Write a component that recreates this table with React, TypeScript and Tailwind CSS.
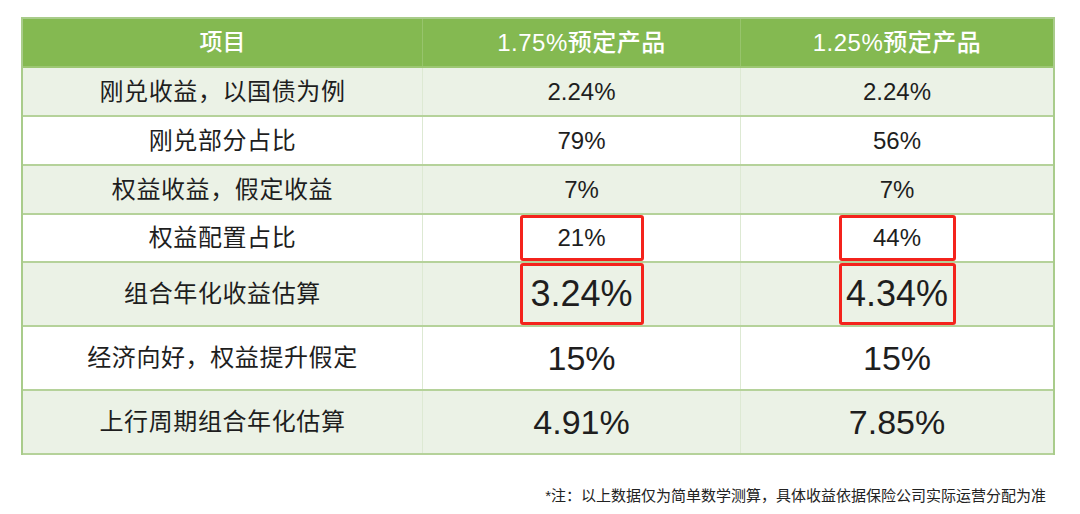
import React from "react";

const FONT = {
  fontFamily: '"Liberation Sans", "Noto Sans CJK SC", sans-serif',
};

type Row = {
  label: string;
  a: string;
  b: string;
  h: string;
  shade: boolean;
  big?: string;
  box?: boolean;
};

const rows: Row[] = [
  { label: "刚兑收益，以国债为例", a: "2.24%", b: "2.24%", h: "h-[49px]", shade: true },
  { label: "刚兑部分占比", a: "79%", b: "56%", h: "h-[49px]", shade: false },
  { label: "权益收益，假定收益", a: "7%", b: "7%", h: "h-[49px]", shade: true },
  { label: "权益配置占比", a: "21%", b: "44%", h: "h-[48px]", shade: false, box: true },
  { label: "组合年化收益估算", a: "3.24%", b: "4.34%", h: "h-[64px]", shade: true, big: "text-[36px]", box: true },
  { label: "经济向好，权益提升假定", a: "15%", b: "15%", h: "h-[64px]", shade: false, big: "text-[34px]" },
  { label: "上行周期组合年化估算", a: "4.91%", b: "7.85%", h: "h-[64px]", shade: true, big: "text-[34px]" },
];

function Value({ v, big, box, w }: { v: string; big?: string; box?: boolean; w: string }) {
  const size = big ?? "text-[24px]";
  if (box) {
    return (
      <div
        className={`${w} h-full border-[3px] border-[#f4231c] rounded-[3px] flex items-center justify-center ${size} text-[#1e1e1e] leading-none`}
      >
        {v}
      </div>
    );
  }
  return <div className={`${size} text-[#1e1e1e] leading-none`}>{v}</div>;
}

export default function App() {
  return (
    <div className="w-[1080px] h-[514px] bg-white relative" style={FONT}>
      <div className="pt-[17px] pl-[21px]">
        <div className="w-[1034px] border-x-2 border-t-2 border-[#a9cc8b]">
          {/* header */}
          <div className="grid grid-cols-[400px_318px_312px] h-[49px] bg-[#84b951] border-b-2 border-[#9cc772]">
            <div className="flex items-center justify-center text-white text-[23px] font-medium border-r border-[#97c46c]">
              项目
            </div>
            <div className="flex items-center justify-center text-white text-[24px] font-medium tracking-[0.5px] border-r border-[#97c46c]">
              1.75%预定产品
            </div>
            <div className="flex items-center justify-center text-white text-[24px] font-medium tracking-[0.5px]">
              1.25%预定产品
            </div>
          </div>
          {rows.map((r, i) => (
            <div
              key={i}
              className={`grid grid-cols-[400px_318px_312px] ${r.h} border-b-2 border-[#b5d29a] ${
                r.shade ? "bg-[#ebf2e6]" : "bg-white"
              }`}
            >
              <div className="flex items-center justify-center text-[24px] tracking-[0.6px] text-[#1e1e1e] border-r border-[#dde9d3] leading-none">
                {r.label}
              </div>
              <div className="flex items-center justify-center border-r border-[#dde9d3]">
                <Value v={r.a} big={r.big} box={r.box} w="w-[124px]" />
              </div>
              <div className="flex items-center justify-center">
                <Value v={r.b} big={r.big} box={r.box} w="w-[117px]" />
              </div>
            </div>
          ))}
        </div>
      </div>
      <div className="flex justify-end pr-[34px] mt-[33px]">
        <div className="text-[15px] leading-[16px] text-[#222]">
          *注：以上数据仅为简单数学测算，具体收益依据保险公司实际运营分配为准
        </div>
      </div>
    </div>
  );
}
